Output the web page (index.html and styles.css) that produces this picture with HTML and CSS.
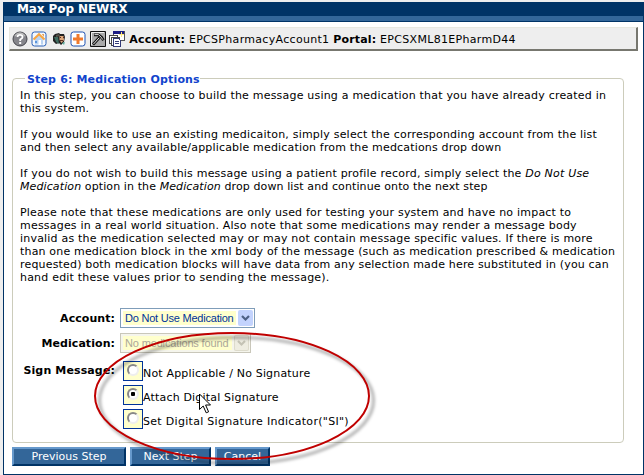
FILE: index.html
```html
<!DOCTYPE html>
<html lang="en">
<head>
<meta charset="utf-8">
<title>Max Pop NEWRX</title>
<link rel="stylesheet" href="styles.css">
</head>
<body>
<main class="window">
  <header class="titlebar">Max Pop NEWRX</header>
  <div class="toolbar">
    <svg class="icon" viewBox="0 0 16 16"><circle cx="8" cy="8" r="7" fill="#85858b" stroke="#44444b"/><path d="M3 5Q8-1 13 5" fill="none" stroke="#bbb" stroke-width="1.5"/><path d="M5.5 6Q5.5 3.8 8 3.8T10.6 6Q10.6 7.2 8.2 8.5V10" fill="none" stroke="#fff" stroke-width="1.8"/><path d="M7.2 11h2v2h-2z" fill="#fff"/></svg>
    <svg class="icon" viewBox="0 0 16 16"><rect x="1" y="1" width="14" height="14" rx="2.5" fill="#f4f8fd" stroke="#2860b8"/><path d="M4 8v5.5h8V8L8 4z" fill="#b9d3f2"/><path d="M2.5 8.5L8 3.2l5.500 5.300" fill="none" stroke="#f7a541" stroke-width="2"/><path d="M11 3h1.800v3z" fill="#e38b32"/><path d="M7.500 9h2.500v5H7.500z" fill="#fff"/><path d="M4 10h2v2H4z" fill="#5a95dc"/></svg>
    <svg class="icon" viewBox="0 0 16 16"><path d="M2 5l2-2 4-1 1 1 4 0 1 3-1 5-3 3-2-2-3 1-3-3z" fill="#222"/><path d="M3 6l2 5 3 2-1-7z" fill="#3f6c61"/><path d="M8.500 5l4 0 .500 4-2.500 3-2-3z" fill="#dda77a"/><path d="M5 4l3-1 1 2-4 1z" fill="#55534a"/><path d="M9 6h1v1H9zm3 0h1v1h-1zM9 9h3v1H9z" fill="#5a2c20"/><path d="M11 12l3-1-1 3z" fill="#5cae9b"/></svg>
    <svg class="icon" viewBox="0 0 16 16"><rect x="1" y="1" width="14" height="14" rx="2.5" fill="#fff" stroke="#1f53b2"/><path d="M8 3v10M3 8h10" stroke="#f07a2c" stroke-width="3"/></svg>
    <svg class="icon" viewBox="0 0 16 16"><path d="M.5.5h15v15H.5z" fill="#aaa" stroke="#111"/><path d="M1.5 14V1.500H14" fill="none" stroke="#eee"/><path d="M3 13.500L9.500 6.500" stroke="#111" stroke-width="2.800"/><path d="M3.500 13L9.500 6.500" stroke="#eee"/><path d="M4 3.800h4.500l3 2.500 2 3" fill="none" stroke="#111" stroke-width="2.800"/><path d="M4.500 3.600h4l2.500 2.500 1.800 2.500" fill="none" stroke="#ddd"/></svg>
    <svg class="icon" viewBox="0 0 16 16" shape-rendering="crispEdges"><path d="M4.500.500h11v9h-11z" fill="#fff" stroke="#555"/><path d="M4 0h11v3H4z" fill="#1b1b83"/><path d="M.500 4.500h8v8h-8z" fill="#fff" stroke="#444"/><path d="M2.500 6.500h8v8h-8z" fill="#fff" stroke="#444"/><path d="M4.500 7.500h5l2 2v6h-7z" fill="#fff" stroke="#333a78"/><path d="M6 10.500h4M6 12.500h4" stroke="#333a78"/><path d="M12.500 1v5M10 3.500h5" stroke="#ffe87c"/></svg>
    <p class="path"><b>Account:</b> <span>EPCSPharmacyAccount1</span> <b>Portal:</b> <span>EPCSXML81EPharmD44</span></p>
  </div>
  <fieldset class="step">
    <legend><span>Step 6: Medication Options</span></legend>
    <div class="copy">
      <p>In this step, you can choose to build the message using a medication that you have already created in<br>this system.</p>
      <p>If you would like to use an existing medicaiton, simply select the corresponding account from the list<br><span class="snug">and then select any available/applicable medication from the medcations drop down</span></p>
      <p>If you do not wish to build this message using a patient profile record, simply select the <i>Do Not Use</i><br><span class="tight"><i>Medication</i> option in the <i>Medication</i> drop down list and continue onto the next step</span></p>
      <p>Please note that these medications are only used for testing your system and have no impact to<br>messages in a real world situation. Also note that some medications may render a message body<br>invalid as the medication selected may or may not contain message specific values. If there is more<br><span class="snug">than one medication block in the xml body of the message (such as medication prescribed &amp; medication</span><br><span class="snug">requested) both medication blocks will have data from any selection made here substituted in (you can</span><br>hand edit these values prior to sending the message).</p>
    </div>
    <div class="form">
      <span class="label">Account:</span>
      <div class="select account"><span>Do Not Use Medication</span><i class="arrow"><svg viewBox="0 0 15 16"><path d="M4 6l3.500 3.500L11 6" fill="none" stroke="#4d6185" stroke-width="2.200"/></svg></i></div>
      <span class="label">Medication:</span>
      <div class="select medication"><span>No medications found</span><i class="arrow"><svg viewBox="0 0 15 16"><path d="M4 6l3.500 3.500L11 6" fill="none" stroke="#c4c3b5" stroke-width="2.200"/></svg></i></div>
      <span class="label sign">Sign Message:</span>
      <div class="radios">
        <div class="option"><span class="box"><i class="radio"></i></span><span>Not Applicable / No Signature</span></div>
        <div class="option"><span class="box"><i class="radio checked"></i></span><span>Attach Digital Signature</span></div>
        <div class="option wide"><span class="box"><i class="radio"></i></span><span>Set Digital Signature Indicator("SI")</span></div>
      </div>
    </div>
  </fieldset>
  <div class="buttons">
    <div class="button previous">Previous Step</div>
    <div class="button next">Next Step</div>
    <div class="button cancel">Cancel</div>
  </div>
</main>
<svg class="callout" viewBox="0 0 290 142">
  <defs><filter id="soft"><feGaussianBlur stdDeviation="1.5"/></filter></defs>
  <ellipse cx="144.500" cy="71.500" rx="137" ry="63" fill="none" stroke="#000" stroke-opacity=".3" stroke-width="3" filter="url(#soft)"/>
  <ellipse cx="140" cy="67" rx="137" ry="63" fill="none" stroke="#c00000" stroke-width="2"/>
</svg>
<svg class="pointer" viewBox="0 0 13 21"><path d="M.5 1v15.500l3.700-3.500 3 6.800 2.400-1-3-6.800h4.900z" fill="#fff" stroke="#000"/></svg>
</body>
</html>
```

FILE: styles.css
```css
* { box-sizing: border-box; }
body {
  margin: 0;
  padding: 2px 0 0 3px;
  height: 475px;
  overflow: hidden;
  background: #eee;
  color: #000;
  font: 11px/13px "DejaVu Sans", Verdana, sans-serif;
}
.window {
  width: 641px;
  height: 473px;
  border: 1px solid #036;
  border-top: 0;
  background: #fff;
}
.titlebar {
  height: 20px;
  padding-left: 13px;
  background: #036;
  border-bottom: 1px solid #036;
  box-shadow: inset 0 -5px #369;
  color: #fff;
  font-size: 12px;
  font-weight: bold;
  letter-spacing: -.1px;
  line-height: 15px;
}
.toolbar {
  display: flex;
  align-items: center;
  gap: 3.4px;
  width: 629px;
  height: 24px;
  margin: 5px 0 0 5px;
  padding-left: 2px;
  background: #eee;
  border-style: solid;
  border-width: 1px 2px 2px 1px;
  border-color: #e8e8e0 #77776f #77776f #e8e8e0;
}
.icon { width: 16px; height: 16px; flex: none; }
.path { margin: 2px 0 0 1px; white-space: nowrap; letter-spacing: .31px; }
.path b { letter-spacing: .16px; }
.step {
  width: 612px;
  height: 371px;
  margin: 21px 0 0 8px;
  padding: 0 0 0 7px;
  border: 1px solid #ccccbb;
  border-radius: 4px;
}
.step legend {
  height: 13px;
  margin-left: 5px;
  padding: 0 0 0 2px;
  color: #14c;
  font-weight: bold;
  letter-spacing: .16px;
}
.step legend span { display: block; padding-top: 1px; }
.copy { height: 223px; padding-top: 4px; white-space: nowrap; letter-spacing: .205px; }
.copy p { margin: 0 0 13px; }
.copy .snug { letter-spacing: .175px; }
.copy .tight { letter-spacing: .105px; }
.form {
  display: grid;
  grid-template-columns: 95px auto;
  grid-template-rows: 20px 20px 70px;
  column-gap: 5px;
  row-gap: 5px;
}
.label { text-align: right; font-weight: bold; line-height: 21px; white-space: nowrap; letter-spacing: .06px; }
.sign { letter-spacing: .13px; line-height: 18px; padding-top: 4px; }
.select {
  display: flex;
  align-items: center;
  justify-content: space-between;
  height: 20px;
  padding: 1px;
  border: 1px solid #7f9db9;
  background: #fff;
  font: 11px/16px "Liberation Sans", Arial, sans-serif;
}
.select span { flex: 1; min-width: 0; height: 14px; line-height: 15px; margin: 0 2px 0 1px; padding-left: 2px; background: #ffc; white-space: nowrap; }
.account { width: 135px; color: #003399; letter-spacing: -.22px; }
.medication { width: 131px; border-color: #c9c7ba; background: #f5f5ec; color: #aca899; letter-spacing: -.15px; }
.arrow { flex: none; width: 15px; height: 16px; border-radius: 2px; background: #c3d3fd; }
.arrow svg { display: block; width: 15px; height: 16px; }
.medication .arrow { background: #eeede1; box-shadow: inset 0 0 0 1px #dddbcc; }
.radios { display: grid; grid-template-rows: repeat(3, 20px); gap: 4px; padding: 3px 0 0 3px; }
.option { display: flex; white-space: nowrap; letter-spacing: .18px; }
.wide { letter-spacing: .3px; }
.option > span:last-child { line-height: 25px; }
.box { width: 20px; height: 20px; padding: 2px 3px; border: 1px solid #039; background: #ffc; }
.radio { display: block; width: 12px; height: 12px; border: 2px solid; border-color: #888 #eee #eee #888; border-radius: 50%; background: #fff; }
.checked { background: radial-gradient(circle, #000 0 2px, #fff 2.5px); }
.buttons { display: flex; gap: 4px; margin: 4px 0 0 8px; }
.button {
  height: 19px;
  border: 2px solid;
  border-color: #69c #036 #036 #69c;
  background: #369;
  color: #fff;
  line-height: 15px;
  text-align: center;
  white-space: nowrap;
}
.previous { width: 114px; }
.next { width: 81px; }
.cancel { width: 55px; }
.callout { position: absolute; left: 92px; top: 329px; width: 290px; height: 142px; }
.pointer { position: absolute; left: 199px; top: 393px; width: 13px; height: 21px; }
```
